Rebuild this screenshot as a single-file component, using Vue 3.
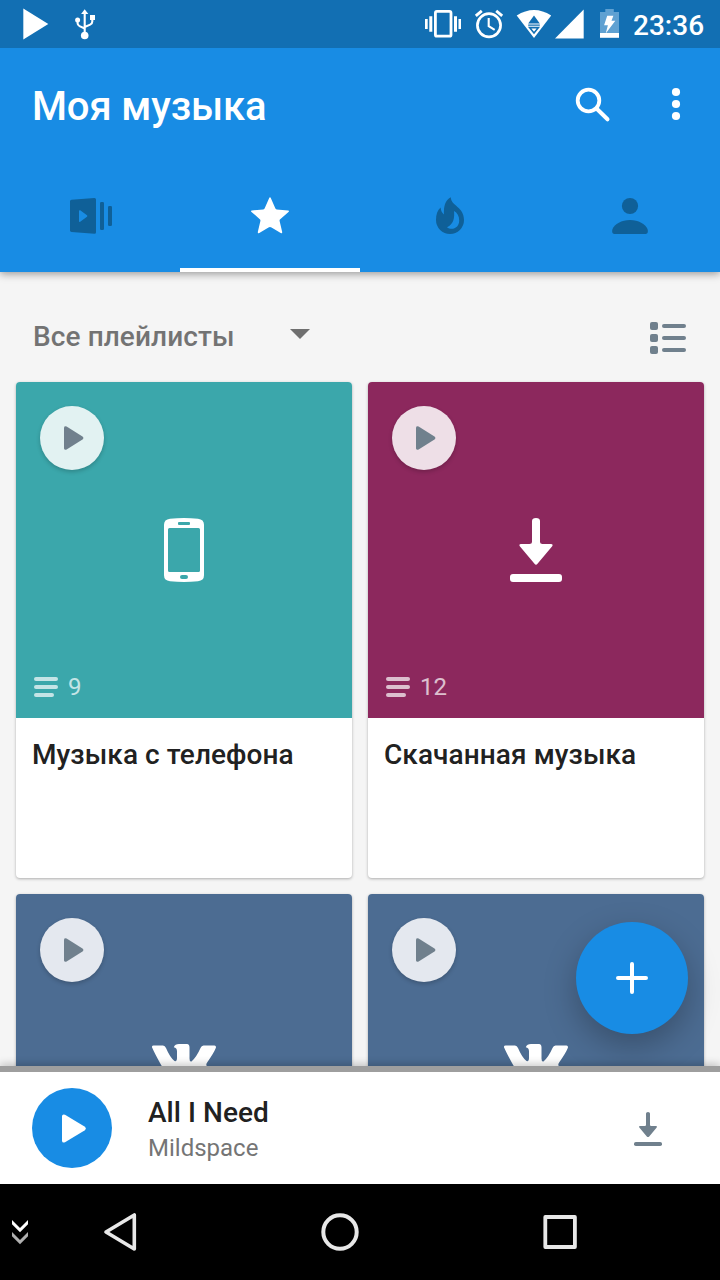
<script setup>
const cards = [
  { title: 'Музыка с телефона', count: 9, icon: 'phone', tone: 'teal' },
  { title: 'Скачанная музыка', count: 12, icon: 'download', tone: 'plum' },
  { title: '', count: null, icon: 'vk', tone: 'steel' },
  { title: '', count: null, icon: 'vk', tone: 'steel' },
]
</script>

<template>
  <div class="screen">
    <div class="status">
      <svg class="st-play" width="26" height="32" viewBox="23 8 26 32"><path d="M23.3 8.5 48.3 24 23.3 39.5z" fill="#fff" /></svg>
      <svg class="st-usb" width="22" height="32" viewBox="74 8 22 32" fill="none" stroke="#fff" stroke-width="2">
        <path d="M84.7 12v22M84.7 28.500l-5.200-2.400q-1.900-.9-1.900-2.800V20M84.700 27l5.500-2.400q2.100-.9 2.100-3V18" stroke-width="2.100" />
        <path d="M84.7 9.3 88.3 14h-7.2z" fill="#fff" stroke="none" />
        <circle cx="84.7" cy="35.5" r="3.8" fill="#fff" stroke="none" />
        <circle cx="77.6" cy="20" r="2.5" fill="#fff" stroke="none" />
        <path d="M90 15h5v5h-5z" fill="#fff" stroke="none" />
      </svg>
      <span class="spacer"></span>
      <svg class="st-vib" width="36" height="28" viewBox="425 10 36 28">
        <rect x="435.4" y="11.4" width="15.6" height="24.8" rx="1.5" fill="none" stroke="#fff" stroke-width="2.8" />
        <path d="M425 19h2.7v10H425zM429.3 16.3h3v15.4h-3zM454 16.3h3v15.4h-3zM458.5 19h2.6v10h-2.6z" fill="#fff" />
      </svg>
      <svg class="st-alarm" width="30" height="32" viewBox="474 8 30 32" fill="none" stroke="#fff">
        <circle cx="489" cy="25.3" r="11.6" stroke-width="2.7" />
        <path d="M488.7 18v8.2l6 3.6" stroke-width="2.1" />
        <path d="m475.8 15.8 6-5M502.2 15.8l-6-5" stroke-width="2.9" />
      </svg>
      <svg class="st-wifi" width="36" height="30" viewBox="516 9 36 30">
        <path d="M516.7 15.5Q534 4.5 551.2 15.5L534 38z" fill="#fff" />
        <path d="M534 15.5 539.8 23.5h-11.6zM528.2 24.6h11.6v1.2h-11.6z" fill="#126fb3" />
        <path d="M529.7 27.7h8.6L534 33z" fill="none" stroke="#126fb3" stroke-width="1.7" />
      </svg>
      <svg class="st-cell" width="30" height="30" viewBox="555 9 30 30"><path d="M583.7 9.5V38.5H555z" fill="#fff" /></svg>
      <svg class="st-bat" width="20" height="30" viewBox="600 9 20 30">
        <path d="M605.3 9h8.500v3h5.200v21h-19V12h5.300z" fill="#5fa1d2" />
        <path d="M600 33h19v4.800h-19z" fill="#fff" />
        <path d="M607.200 15.800h6.200l-1.900 5h3.800L605.700 33.500l2.200-8.200h-3.800z" fill="#fff" />
      </svg>
      <span class="clock">23:36</span>
    </div>

    <header class="bar">
      <div class="titlebar">
        <h1>Моя музыка</h1>
        <svg class="search" width="36" height="36" viewBox="575 87 36 36" fill="none" stroke="#fff">
          <circle cx="588.5" cy="100.5" r="10.8" stroke-width="3.8" />
          <path d="m597 109 10.500 10.300" stroke-width="4" stroke-linecap="round" />
        </svg>
        <svg class="more" width="10" height="34" viewBox="671 87 10 34" fill="#fff"><circle cx="676" cy="92" r="4.1" /><circle cx="676" cy="104" r="4.1" /><circle cx="676" cy="116" r="4.1" /></svg>
      </div>
      <nav class="tabs">
        <div class="tab">
          <svg width="44" height="38" viewBox="69 197 44 38" fill="#0f6098">
            <path fill-rule="evenodd" d="M71.5 199.8 94.5 198q1.5 0 1.5 1.5v32.8q0 1.5-1.5 1.5l-23-1.8q-1.5-.1-1.5-1.5v-29.2q0-1.4 1.5-1.5zM79 211v10.2q.2 1.2 1.2.5l6.8-5q.7-.7 0-1.4l-6.8-5q-1-.5-1.2.7z" />
            <rect x="100" y="202" width="4" height="28" rx="1.3" /><rect x="108" y="206" width="4" height="20" rx="1.3" />
          </svg>
        </div>
        <div class="tab active">
          <svg width="40" height="40" viewBox="250 196 40 40"><path d="M270 197.2q.5 0 .8.8l4.6 10.5q.4.8 1.3.9l11.4 1q1.6.4.4 1.5l-8.3 7.3q-.8.7-.6 1.7l2.6 11.2q.1 1.8-1.5 1l-9.2-5.6q-1.5-.8-3 0l-9.2 5.6q-1.6.8-1.5-1l2.6-11.2q.2-1-.6-1.7l-8.3-7.3q-1.2-1.1.4-1.5l11.4-1q.9-.1 1.3-.9l4.6-10.5q.3-.8.8-.8z" fill="#fff" /></svg>
        </div>
        <div class="tab">
          <svg width="30" height="40" viewBox="435 196 30 40" fill="#0f6098">
            <path fill-rule="evenodd" d="M450.800 197.200C451 206 464 206.500 464 220a14 14 0 0 1-28 0c0-5.500 1.600-9.800 4.600-12.400.2 2.800 1.300 5.400 3.300 6.800C443.700 206 445.200 200 450.800 197.200zM454 211c.7 6.500-.2 13.200-7 16.300 5 3.500 12.200.7 12.200-6.800 0-4.500-2-7.700-5.200-9.500z" />
          </svg>
        </div>
        <div class="tab">
          <svg width="38" height="38" viewBox="611 197 38 38" fill="#0f6098">
            <circle cx="630" cy="206" r="8.1" /><path d="M630 220c8.500 0 15.400 4.200 17.500 9 .8 2.800.3 5-1.700 5h-31.600c-2 0-2.500-2.200-1.700-5 2.100-4.800 9-9 17.500-9z" />
          </svg>
        </div>
      </nav>
    </header>

    <main class="content">
      <div class="filter">
        <span class="filter-name">Все плейлисты</span>
        <svg class="caret" width="20" height="10" viewBox="0 0 20 10"><path d="M0 0h20L10 10z" fill="#6f6f6f" /></svg>
        <span class="spacer"></span>
        <svg class="view" width="36" height="32" viewBox="0 0 36 32" fill="#70808d">
          <g v-for="n in 3" :key="n" :transform="`translate(0 ${(n - 1) * 12})`"><rect width="8" height="8" rx="2" /><rect x="12" y="2" width="24" height="4" rx="2" /></g>
        </svg>
      </div>
      <div class="grid">
        <article v-for="(c, i) in cards" :key="i" class="card">
          <div class="cover" :class="c.tone">
            <div class="play">
              <svg width="20" height="24" viewBox="0 0 20 24"><path d="M0 1.500Q.4-.4 2.600.5L18.500 10.400q1.800 1.600 0 3.200L2.600 23.500Q.4 24.400 0 22.500z" fill="#70808d" /></svg>
            </div>
            <svg v-if="c.icon === 'phone'" class="art" width="40" height="64" viewBox="0 0 40 64">
              <path fill-rule="evenodd" fill="#fff" d="M6 .8Q20-.8 34 .8q6 .7 6 6v50.400q0 5.300-6 6-14 1.600-28 0-6-.7-6-6V6.800q0-5.300 6-6zM15 4q-1 0-1 1v1q0 1 1 1h10q1 0 1-1V5q0-1-1-1zM5.500 10Q4 10 4 11.500v41Q4 54 5.500 54h29q1.500 0 1.500-1.500v-41Q36 10 34.500 10zM18 57q-2 0-2 2t2 2h4q2 0 2-2t-2-2z" />
            </svg>
            <svg v-else-if="c.icon === 'download'" class="art" width="52" height="64" viewBox="0 0 52 64" fill="#fff">
              <path d="M22 3q0-3 4-3t4 3v21q0 2 2.500 2H41q2.500.2 1.200 2.300L27.500 45.800q-1.500 1.700-3 0L9.800 28.300Q8.500 26.200 11 26h8.500q2.500 0 2.500-2z" /><rect y="56" width="52" height="8" rx="3" />
            </svg>
            <svg v-else class="art vk" width="64" height="38" viewBox="0 0 64 38" fill="#fff">
              <path d="M1.500 1.500H11q2 0 3 2.500 4 9.500 8.500 13 2.500.8 2.500-3V7.500q0-3.800-3.200-4.300Q23 .1 27 .1h8q2.500 0 2.500 3.500v11q0 3.500 2 2.800 5-4.200 9-13.400Q49.500 1.500 51.500 1.500h11q2 .3 1.300 2.500-2 5-8.500 14.200-2 2.500 0 4.500 7 6.500 9 11.500.6 3-2.300 3H53q-2 0-4-2.500-6.500-7.200-9.500-8-2.200 0-2.200 3.500v4q0 3-4 3Q18 37.200 8 19 2.500 9 .1 3.500-.5 1.700 1.500 1.500z" />
            </svg>
            <div v-if="c.count" class="count">
              <svg width="24" height="20" viewBox="0 0 24 20" fill="#fff"><rect width="24" height="4" rx="2" /><rect y="8" width="24" height="4" rx="2" /><rect y="16" width="20" height="4" rx="2" /></svg>
              <span>{{ c.count }}</span>
            </div>
          </div>
          <div class="name">{{ c.title }}</div>
        </article>
      </div>
      <button class="fab" aria-label="Добавить">
        <svg width="32" height="32" viewBox="0 0 32 32"><path d="M16 2v28M2 16h28" stroke="#fff" stroke-width="4" stroke-linecap="round" /></svg>
      </button>
    </main>

    <div class="progress"></div>
    <footer class="player">
      <div class="big-play">
        <svg width="24" height="29" viewBox="0 0 24 29"><path d="M0 2Q.4-.3 3 .8L22.500 12.600q2.500 1.900 0 3.800L3 28.200Q.4 29.300 0 27z" fill="#fff" /></svg>
      </div>
      <div class="track">
        <div class="song">All I Need</div>
        <div class="artist">Mildspace</div>
      </div>
      <span class="spacer"></span>
      <svg class="save" width="28" height="34" viewBox="0 0 28 34" fill="#70808d">
        <path d="M12 1.500Q12 0 14 0t2 1.500V13q0 1 1.200 1h5q1.300.2.5 1.400l-7.500 9q-1.200 1.300-2.400 0l-7.500-9q-.8-1.200.5-1.400h5Q12 14 12 13z" /><rect y="30" width="28" height="4" rx="1.800" />
      </svg>
    </footer>

    <nav class="sysnav">
      <svg class="hide" width="18" height="26" viewBox="11 1219 18 26">
        <path d="m12 1220 8 8 8-8v4.200l-8 8-8-8z" fill="#fff" /><path d="m12 1232 8 8 8-8v4.200l-8 8-8-8z" fill="#b0b0b0" />
      </svg>
      <svg class="back" width="34" height="40" viewBox="103 1212 34 40"><path d="M134.300 1215v34L106 1232z" fill="none" stroke="#e8e8e8" stroke-width="3.600" stroke-linejoin="round" /></svg>
      <svg class="home" width="40" height="40" viewBox="320 1212 40 40"><circle cx="340" cy="1232" r="16.700" fill="none" stroke="#e8e8e8" stroke-width="4" /></svg>
      <svg class="recent" width="36" height="36" viewBox="542 1214 36 36"><rect x="545.300" y="1217" width="29.600" height="30" fill="none" stroke="#e8e8e8" stroke-width="3.800" stroke-linejoin="round" /></svg>
    </nav>
  </div>
</template>

<style>
body { margin: 0; background: #f4f4f4; }
</style>

<style scoped>
.screen { width: 720px; height: 1280px; display: flex; flex-direction: column; overflow: hidden; background: #f5f5f5; font-family: Roboto, "Noto Sans", sans-serif; }
svg { display: block; flex: none; }
.spacer { flex: 1; }
.status { height: 48px; flex: none; display: flex; align-items: center; background: #126fb3; padding: 0 15px 0 23px; position: relative; z-index: 3; }
.st-usb { margin-left: 25px; }
.st-alarm { margin-left: 13px; }
.st-wifi { margin-left: 12px; }
.st-cell { margin-left: 3px; }
.st-bat { margin-left: 15px; }
.clock { width: 72px; margin-left: 13px; color: #fff; font-size: 28px; font-weight: 500; line-height: 34px; padding-top: 3px; white-space: nowrap; }
.bar { height: 224px; flex: none; background: #188ce4; box-shadow: 0 2px 8px rgba(0, 0, 0, .38); position: relative; z-index: 2; display: flex; flex-direction: column; }
.titlebar { height: 112px; display: flex; align-items: center; padding: 0 39px 0 32px; box-sizing: border-box; }
h1 { margin: 6px 0 0; flex: 1; color: #fff; font-size: 40px; font-weight: 500; line-height: 48px; letter-spacing: -.12px; }
.search { margin-right: 60px; margin-top: 2px; }
.tabs { flex: 1; display: grid; grid-template-columns: repeat(4, 1fr); }
.tab { display: flex; justify-content: center; align-items: center; border-bottom: 4px solid transparent; padding-top: 4px; }
.tab:first-child { padding-left: 2px; }
.tab.active { border-bottom-color: #fff; }
.content { flex: 1; min-height: 0; overflow: hidden; position: relative; }
.filter { height: 110px; box-sizing: border-box; padding: 20px 34px 0 33px; display: flex; align-items: center; }
.filter-name { width: 257px; color: #737373; font-size: 28px; font-weight: 500; line-height: 34px; letter-spacing: .1px; }
.caret { margin-top: -7px; }
.view { margin-top: 2px; }
.grid { display: grid; grid-template-columns: 336px 336px; gap: 16px; padding: 0 16px; }
.card { height: 496px; border-radius: 4px; background: #fff; box-shadow: 0 1px 3px rgba(0, 0, 0, .3); }
.cover { height: 336px; border-radius: 4px 4px 0 0; position: relative; display: flex; align-items: center; justify-content: center; }
.teal { background: #3ba7ab; }
.plum { background: #8c285d; }
.steel { background: #4c6c92; }
.play { position: absolute; left: 24px; top: 24px; width: 64px; height: 64px; box-sizing: border-box; padding-left: 24px; border-radius: 50%; box-shadow: 0 2px 4px rgba(0, 0, 0, .2); display: flex; align-items: center; }
.teal .play { background: #e2f2f2; }
.plum .play { background: #eedfe7; }
.steel .play { background: #e4e8ef; }
.count { position: absolute; left: 18px; bottom: 17px; display: flex; align-items: center; gap: 10px; color: #fff; opacity: .7; font-size: 24px; line-height: 28px; }
.name { padding: 19px 16px; color: #212121; font-size: 28px; font-weight: 500; line-height: 36px; letter-spacing: .08px; }
.vk { margin-top: 2px; }
.fab { position: absolute; right: 32px; bottom: 32px; width: 112px; height: 112px; border: 0; border-radius: 50%; padding: 0; background: #188ce4; box-shadow: 0 12px 32px rgba(0, 0, 0, .26); display: flex; align-items: center; justify-content: center; }
.progress { height: 6px; flex: none; background: #9e9e9e; box-shadow: 0 -1px 8px rgba(0, 0, 0, .3); position: relative; }
.player { height: 112px; flex: none; box-sizing: border-box; background: #fff; position: relative; display: flex; align-items: center; padding: 0 58px 0 32px; }
.big-play { width: 80px; height: 80px; border-radius: 50%; background: #188ce4; box-sizing: border-box; padding-left: 30px; display: flex; align-items: center; }
.track { margin-left: 36px; padding-top: 4px; }
.song { color: #212121; font-size: 28px; font-weight: 500; line-height: 36px; letter-spacing: .05px; }
.artist { color: #757575; font-size: 24px; line-height: 34px; }
.save { margin-top: 2px; }
.sysnav { height: 96px; flex: none; background: #000; display: flex; align-items: center; padding-left: 11px; }
.back { margin-left: 74px; }
.home { margin-left: 183px; }
.recent { margin-left: 182px; }
</style>
